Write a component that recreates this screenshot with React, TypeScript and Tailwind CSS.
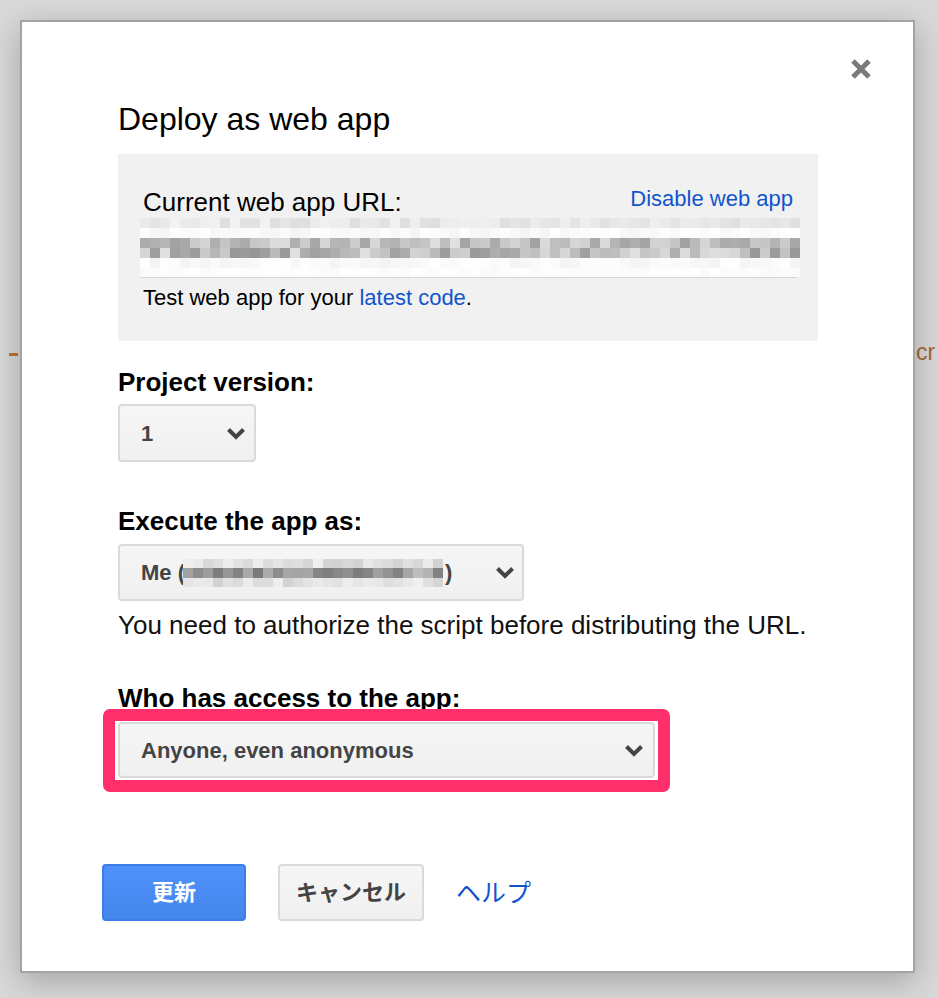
import React from "react";

const FONT = '"Liberation Sans", Arial, "Noto Sans CJK JP", sans-serif';

// deterministic pseudo random, used to draw the pixelated (censored) strips
function makeRand(seed: number) {
  let s = seed;
  return () => {
    s = (s * 1103515245 + 12345) % 2147483648;
    return s / 2147483648;
  };
}

function grey(v: number) {
  const n = Math.max(0, Math.min(255, Math.round(v)));
  return `rgb(${n},${n},${n})`;
}

function Mosaic({
  cols,
  rows,
  cell,
  seed
}: {
  cols: number;
  rows: { h: number; min: number; max: number }[];
  cell: number;
  seed: number;
}) {
  const rand = makeRand(seed);
  return (
    <div className="flex flex-col">
      {rows.map((r, ri) => (
        <div key={ri} className="flex">
          {Array.from({ length: cols }).map((_, ci) => (
            <div
              key={ci}
              className="shrink-0"
              style={{
                width: cell,
                height: r.h,
                background: grey(r.min + (r.max - r.min) * rand())
              }}
            />
          ))}
        </div>
      ))}
    </div>
  );
}

function Chevron() {
  return (
    <svg width="20" height="13" viewBox="0 0 20 13" className="shrink-0">
      <path d="M2.5 2.5 L10 10 L17.5 2.5" fill="none" stroke="#444" strokeWidth="4" />
    </svg>
  );
}

function Select({
  className,
  children
}: {
  className: string;
  children: React.ReactNode;
}) {
  return (
    <div
      className={`flex items-center justify-between rounded-[4px] border-2 border-[#dadada] bg-gradient-to-b from-[#f6f6f6] to-[#f0f0f0] pl-[21px] text-[22px] font-bold text-[#444] ${className}`}
    >
      {children}
    </div>
  );
}

export default function App() {
  return (
    <div
      className="relative min-h-[998px] bg-[#d9d9d9] pl-[20px] pt-[20px]"
      style={{ fontFamily: FONT }}
    >
      {/* page content behind the dialog */}
      <div className="absolute left-[9px] top-[353px] h-[3px] w-[9px] bg-[#b8753c]" />
      <span className="absolute left-[916px] top-[339px] text-[23px] leading-[26px] text-[#a5693a]">
        cr
      </span>

      <div className="relative z-10 h-[953px] w-[895px] border-2 border-[#a3a3a3] bg-white pl-[96px] shadow-[0_8px_30px_rgba(0,0,0,0.25)]">
        <button className="absolute right-[40px] top-[35px]">
          <svg width="24" height="24" viewBox="0 0 24 24">
            <path d="M4 4 L20 20 M20 4 L4 20" stroke="#7a7a7a" strokeWidth="5" />
          </svg>
        </button>

        <h1 className="pt-[79px] text-[32px] leading-[36px] text-black">Deploy as web app</h1>

        <div className="mt-[17px] h-[187px] w-[700px] bg-[#f1f1f1] px-[25px] pt-[33px]">
          <div className="flex items-start justify-between">
            <span className="text-[26px] leading-[30px] text-black">Current web app URL:</span>
            <a className="-mt-[3px] text-[22px] leading-[30px] text-[#1155cc]">Disable web app</a>
          </div>
          <div className="-ml-[3px] mt-[1px] w-[660px] overflow-hidden">
            <Mosaic
              cols={66}
              cell={10}
              seed={7}
              rows={[
                { h: 10, min: 222, max: 242 },
                { h: 10, min: 244, max: 255 },
                { h: 10, min: 160, max: 225 },
                { h: 10, min: 150, max: 225 },
                { h: 10, min: 244, max: 255 },
                { h: 9, min: 250, max: 255 }
              ]}
            />
          </div>
          <div className="-ml-[3px] h-px w-[657px] bg-[#d6d6d6]" />
          <p className="mt-[7px] text-[22px] leading-[26px] text-black">
            Test web app for your <a className="text-[#1155cc]">latest code</a>.
          </p>
        </div>

        <p className="mt-[26px] text-[26px] font-bold leading-[30px] text-black">Project version:</p>
        <Select className="mt-[7px] h-[58px] w-[138px] pr-[8px]">
          <span>1</span>
          <Chevron />
        </Select>

        <p className="mt-[44px] text-[26px] font-bold leading-[30px] text-black">Execute the app as:</p>
        <Select className="mt-[8px] h-[57px] w-[406px] pr-[7px]">
          <span className="flex items-center">
            Me (
            <span className="-ml-[2px] mr-[2px] overflow-hidden">
              <Mosaic
                cols={26}
                cell={10}
                seed={31}
                rows={[
                  { h: 9, min: 210, max: 240 },
                  { h: 10, min: 120, max: 190 },
                  { h: 9, min: 210, max: 240 }
                ]}
              />
            </span>
            )
          </span>
          <Chevron />
        </Select>
        <p className="mt-[9px] text-[26px] leading-[30px] text-[#111]">
          You need to authorize the script before distributing the URL.
        </p>

        <p className="mt-[43px] text-[26px] font-bold leading-[30px] text-black">Who has access to the app:</p>
        <div className="relative -ml-[15px] -mt-[4px] w-[567px] rounded-[7px] border-[12px] border-[#ff2f6c] bg-white px-[3px] pb-[2px] pt-[1px]">
          <Select className="h-[56px] w-[537px] pr-[9px]">
            <span>Anyone, even anonymous</span>
            <Chevron />
          </Select>
        </div>

        <div className="-ml-[16px] mt-[72px] flex items-center gap-[32px]">
          <button className="h-[57px] w-[144px] rounded-[4px] border-2 border-[#3b7de9] bg-gradient-to-b from-[#4f91fb] to-[#4586ec] text-[22px] font-bold text-white">
            更新
          </button>
          <button className="h-[57px] w-[146px] rounded-[4px] border-2 border-[#dadada] bg-gradient-to-b from-[#f6f6f6] to-[#f0f0f0] text-[22px] font-bold text-[#444]">
            キャンセル
          </button>
          <a className="text-[25px] leading-[30px] text-[#1155cc]">ヘルプ</a>
        </div>
      </div>
    </div>
  );
}
